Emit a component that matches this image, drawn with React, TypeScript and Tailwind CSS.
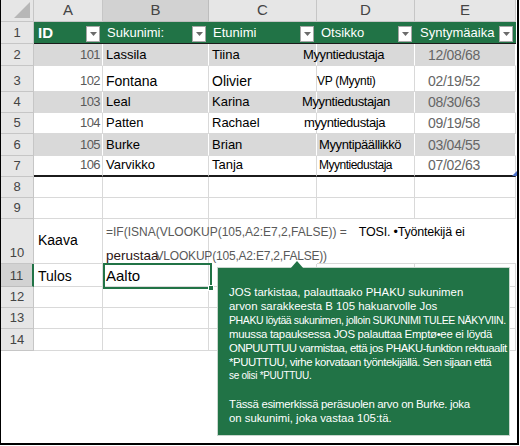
import React from "react";

const font = { fontFamily: '"Liberation Sans", Arial, sans-serif' };

// column widths: row header, A, B, C, D, E
const colW = ["w-[33px]", "w-[69px]", "w-[106px]", "w-[108px]", "w-[98px]", "w-[101px]"];

const FilterButton = () => (
  <span className="absolute right-[3px] top-[4px] flex h-[16px] w-[14px] items-center justify-center border border-[#a6a6a6] bg-white">
    <svg width="7" height="4" viewBox="0 0 7 4">
      <path d="M0 0 L7 0 L3.5 4 Z" fill="#6b6b6b" />
    </svg>
  </span>
);

type RowProps = {
  num: number;
  h: string;
  band?: boolean;
  selected?: boolean;
  cells: React.ReactNode[];
  cellClass?: string;
};

const Row = ({ num, h, band, selected, cells, cellClass = "" }: RowProps) => (
  <div className={`flex ${h}`}>
    <div
      className={`${colW[0]} shrink-0 flex items-end justify-center pb-[3px] border-b border-r text-[13px] leading-[14px] text-[#444] ${
        selected ? "bg-[#d2d2d2] border-r-2 border-r-[#217346] border-b-[#bdbdbd]" : "bg-[#e6e6e6] border-[#c6c6c6]"
      }`}
    >
      {num}
    </div>
    {cells.map((c, i) => (
      <div
        key={i}
        className={`${colW[i + 1]} shrink-0 relative flex items-end pb-[2px] whitespace-nowrap text-[13px] leading-[16px] border-r border-b ${
          band ? "bg-[#d9d9d9] border-r-white border-b-[#d9d9d9]" : "border-[#d9d9d9]"
        } ${cellClass}`}
      >
        {c}
      </div>
    ))}
  </div>
);

const Num = ({ v }: { v: number }) => (
  <span className="ml-auto mr-[2px] text-[13px] tracking-[-0.6px] text-[#595959]">{v}</span>
);

const Date = ({ v }: { v: string }) => (
  <span className="ml-[13px] text-[14px] tracking-[-0.3px] text-[#666]">{v}</span>
);

const data = [
  { id: 101, last: "Lassila", first: "Tiina", title: "Myyntiedustaja", tCls: "ml-[-14px] tracking-[-0.4px]", date: "12/08/68", h: "h-[22px]", band: true },
  { id: 102, last: "Fontana", first: "Olivier", title: "VP (Myynti)", tCls: "ml-[0px] text-[12px] tracking-[-0.3px]", date: "02/19/52", h: "h-[26px]", band: false, big: true },
  { id: 103, last: "Leal", first: "Karina", title: "Myyntiedustajan", tCls: "ml-[-15px] tracking-[-0.4px]", date: "08/30/63", h: "h-[21px]", band: true },
  { id: 104, last: "Patten", first: "Rachael", title: "myyntiedustaja", tCls: "ml-[-13px] tracking-[-0.4px]", date: "09/19/58", h: "h-[21px]", band: false },
  { id: 105, last: "Burke", first: "Brian", title: "Myyntipäällikkö", tCls: "ml-[2px] tracking-[-0.4px]", date: "03/04/55", h: "h-[22px]", band: true },
  { id: 106, last: "Varvikko", first: "Tanja", title: "Myyntiedustaja", tCls: "ml-[2px] text-[12px] tracking-[-0.5px] bg-white", date: "07/02/63", h: "h-[21px]", band: false },
];

const headers = ["ID", "Sukunimi:", "Etunimi", "Otsikko", "Syntymäaika"];
const letters = ["A", "B", "C", "D", "E"];

export default function App() {
  return (
    <div
      className="relative w-[519px] h-[445px] bg-white overflow-hidden border-l border-r-2 border-b-2 border-black"
      style={font}
    >
      {/* column letters */}
      <div className="flex h-[22px]">
        <div className={`${colW[0]} shrink-0 relative bg-[#e6e6e6] border-r border-b border-[#c6c6c6]`}>
          <svg className="absolute right-[3px] bottom-[3px]" width="16" height="16" viewBox="0 0 16 16">
            <path d="M16 0 L16 16 L0 16 Z" fill="#b7b7b7" />
          </svg>
        </div>
        {letters.map((l, i) => (
          <div
            key={l}
            className={`${colW[i + 1]} shrink-0 flex items-center justify-center text-[15px] text-[#444] border-r border-b ${
              l === "B" ? "bg-[#d2d2d2] border-[#bdbdbd]" : "bg-[#e6e6e6] border-[#c6c6c6]"
            }`}
          >
            {l}
          </div>
        ))}
      </div>

      {/* table header row */}
      <div className="flex h-[22px]">
        <div className={`${colW[0]} shrink-0 flex items-end justify-center pb-[3px] bg-[#e6e6e6] border-r border-b border-[#c6c6c6] text-[13px] leading-[14px] text-[#444]`}>
          1
        </div>
        {headers.map((t, i) => (
          <div
            key={t}
            className={`${colW[i + 1]} shrink-0 relative flex items-end pb-[2px] bg-[#217346] border-b border-b-[#1b1b1b] text-white whitespace-nowrap ${
              i === 0 ? "pl-[4px] text-[15px] font-semibold leading-[17px]" : "pl-[4px] text-[13px] leading-[16px]"
            } ${i === 4 ? "pl-[5px]" : ""}`}
          >
            {t}
            <FilterButton />
          </div>
        ))}
      </div>

      {data.map((d, idx) => (
        <Row
          key={d.id}
          num={idx + 2}
          h={d.h}
          band={d.band}
          cellClass={idx === 5 ? "border-b-[#1b1b1b] border-b-2" : ""}
          cells={[
            <Num v={d.id} />,
            <span className={`ml-[3px] ${d.big ? "text-[14px]" : ""}`}>{d.last}</span>,
            <span className={`ml-[3px] ${d.big ? "text-[14px]" : ""}`}>{d.first}</span>,
            <span className={d.tCls}>{d.title}</span>,
            <Date v={d.date} />,
          ]}
        />
      ))}

      <Row num={8} h="h-[21px]" cells={["", "", "", "", ""]} />
      <Row num={9} h="h-[21px]" cells={["", "", "", "", ""]} />

      {/* formula row */}
      <div className="flex h-[45px]">
        <div className={`${colW[0]} shrink-0 flex items-end justify-center pb-[3px] bg-[#e6e6e6] border-r border-b border-[#c6c6c6] text-[13px] leading-[14px] text-[#444]`}>
          10
        </div>
        <div className={`${colW[1]} shrink-0 flex items-center pb-[2px] pl-[4px] border-r border-b border-[#d9d9d9] text-[14px]`}>
          Kaava
        </div>
        <div className={`${colW[2]} shrink-0 relative border-r border-b border-[#d9d9d9]`}>
          <div className="absolute left-[3px] top-[5px] whitespace-nowrap flex flex-col gap-[8px]">
            <div className="flex items-baseline h-[16px] leading-[16px]">
              <span className="text-[12px] text-[#595959]">=IF(ISNA(VLOOKUP(105,A2:E7,2,FALSE)) =</span>
              <span className="ml-[12px] text-[12.5px] tracking-[-0.2px] text-black">TOSI. •Työntekijä ei</span>
            </div>
            <div className="flex items-baseline h-[16px] leading-[16px]">
              <span className="text-[13.5px] text-[#2b1414]">perustaa</span>
              <span className="ml-[-3px] text-[12px] tracking-[-0.2px] text-[#595959]">VLOOKUP(105,A2:E7,2,FALSE))</span>
            </div>
          </div>
        </div>
        <div className={`${colW[3]} shrink-0`} />
        <div className={`${colW[4]} shrink-0 border-b border-[#d9d9d9]`} />
        <div className={`${colW[5]} shrink-0 border-b border-[#d9d9d9]`} />
      </div>

      <Row
        num={11}
        h="h-[23px]"
        selected
        cells={[
          <span className="ml-[4px] text-[14px]">Tulos</span>,
          <span className="ml-[3px] text-[15px]">Aalto</span>,
          "",
          "",
          "",
        ]}
      />
      <Row num={12} h="h-[21px]" cells={["", "", "", "", ""]} />
      <Row num={13} h="h-[21px]" cells={["", "", "", "", ""]} />
      <Row num={14} h="h-[22px]" cells={["", "", "", "", ""]} />

      {/* selection box around B11 */}
      <div className="absolute left-[102px] top-[263px] h-[26px] w-[109px] border-2 border-[#217346]">
        <span className="absolute right-[-4px] bottom-[-4px] h-[6px] w-[6px] bg-[#217346] border border-white" />
      </div>

      {/* table resize handle */}
      <svg className="absolute left-[511px] top-[171px]" width="5" height="5" viewBox="0 0 5 5">
        <path d="M5 0 L5 5 L0 5 Z" fill="#4a6fc7" />
      </svg>

      {/* callout */}
      <div className="absolute left-[216px] top-[267px] w-[293px] h-[169px] bg-[#217346] border border-[#c9d6ce] text-white text-[11.4px] leading-[14px] pl-[11px] pt-[17px] whitespace-nowrap">
        <svg className="absolute left-[72px] top-[-7px]" width="14" height="8" viewBox="0 0 14 8">
          <path d="M0 8 L7 0 L14 8 Z" fill="#217346" />
        </svg>
        <div>JOS tarkistaa, palauttaako PHAKU sukunimen</div>
        <div>arvon sarakkeesta B 105 hakuarvolle Jos</div>
        <div className="text-[10.5px] tracking-[-0.4px]">PHAKU löytää sukunimen, jolloin SUKUNIMI TULEE NÄKYVIIN.</div>
        <div className="tracking-[-0.3px]">muussa tapauksessa JOS palauttaa Emptø•ee ei löydä</div>
        <div className="tracking-[-0.45px]">ONPUUTTUU varmistaa, että jos PHAKU-funktion rektuaalit</div>
        <div className="tracking-[-0.45px]">*PUUTTUU, virhe korvataan työntekijällä. Sen sijaan että</div>
        <div className="text-[10px] tracking-[-0.3px]">se olisi *PUUTTUU.</div>
        <div className="h-[14px]" />
        <div className="tracking-[-0.3px]">Tässä esimerkissä peräsuolen arvo on Burke. joka</div>
        <div>on sukunimi, joka vastaa 105:tä.</div>
      </div>
    </div>
  );
}
